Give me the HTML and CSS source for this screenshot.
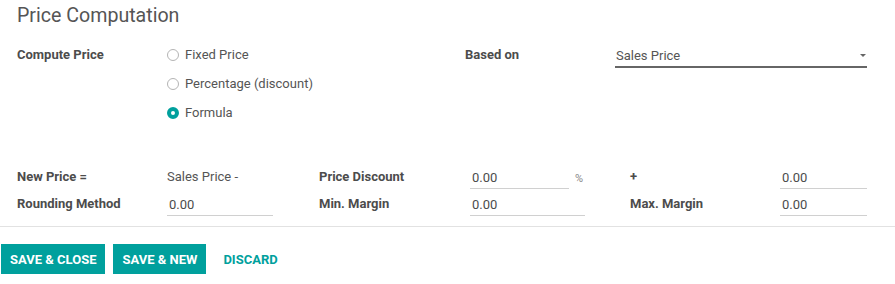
FILE: index.html
```html
<!DOCTYPE html>
<html>
<head>
<meta charset="utf-8">
<link rel="stylesheet" href="styles.css">
</head>
<body>
<div class="sheet">
  <h2 class="title">Price Computation</h2>
  <div class="group-top">
    <div class="lbl">Compute Price</div>
    <div class="radios">
      <label class="radio"><span class="dot"></span>Fixed Price</label>
      <label class="radio"><span class="dot"></span>Percentage (discount)</label>
      <label class="radio"><span class="dot on"></span>Formula</label>
    </div>
    <div class="lbl">Based on</div>
    <div class="select"><span>Sales Price</span><span class="caret"></span></div>
  </div>
  <div class="group-formula">
    <div class="lbl">New Price =</div>
    <div class="val">Sales Price -</div>
    <div class="lbl">Price Discount</div>
    <div class="pct"><div class="input w100">0.00</div><span class="unit">%</span></div>
    <div class="lbl">+</div>
    <div class="input">0.00</div>

    <div class="lbl">Rounding Method</div>
    <div class="input w107">0.00</div>
    <div class="lbl">Min. Margin</div>
    <div class="input w115">0.00</div>
    <div class="lbl">Max. Margin</div>
    <div class="input">0.00</div>
  </div>
</div>
<div class="footer">
  <button class="btn primary">SAVE &amp; CLOSE</button>
  <button class="btn primary">SAVE &amp; NEW</button>
  <button class="btn link">DISCARD</button>
</div>
</body>
</html>
```
FILE: styles.css
```css
html, body {
  margin: 0;
  padding: 0;
  background: #fff;
}
body {
  font-family: Roboto, "Noto Sans", sans-serif;
  font-size: 13px;
  color: #4c4c4c;
  width: 895px;
}
.sheet {
  padding: 0 28px 0 17px;
  border-bottom: 1px solid #e2e2e2;
  height: 227px;
  box-sizing: border-box;
}
.title {
  margin: 0;
  padding-top: 4px;
  font-size: 19.6px;
  font-weight: 400;
  line-height: 24px;
  color: #555;
}
.group-top {
  margin-top: 19px;
  display: grid;
  grid-template-columns: 150px 298px 150px 252px;
  align-items: start;
}
.lbl {
  font-weight: 700;
  color: #4c4c4c;
  line-height: 16px;
}
.radios {
  display: flex;
  flex-direction: column;
  gap: 13px;
}
.radio {
  display: flex;
  align-items: center;
  line-height: 16px;
  color: #555;
}
.dot {
  width: 10px;
  height: 10px;
  border: 1px solid #b4b4b4;
  border-radius: 50%;
  margin-right: 6px;
  box-sizing: content-box;
  flex: none;
}
.dot.on {
  width: 4px;
  height: 4px;
  border: 4px solid #00a09d;
  background: #fff;
}
.select {
  display: flex;
  justify-content: space-between;
  align-items: center;
  border-bottom: 2px solid #666;
  padding: 1px 0 2px 1px;
  line-height: 16px;
  color: #555;
}
.caret {
  width: 0;
  height: 0;
  border-left: 3px solid transparent;
  border-right: 3px solid transparent;
  border-top: 3px solid #666;
  margin-right: 1px;
  margin-top: -1px;
}
.group-formula {
  margin-top: 48px;
  display: grid;
  grid-template-columns: 150px 152px 151px 160px 150px 87px;
  row-gap: 7px;
  align-items: start;
}
.val {
  color: #555;
  line-height: 16px;
}
.input {
  border-bottom: 1px solid #d0d0d0;
  padding: 1px 1px 2px 2px;
  line-height: 16px;
  color: #4c4c4c;
}
.w100 { width: 96px; }
.w107 { width: 103px; }
.w115 { width: 112px; }
.pct {
  display: flex;
  align-items: flex-start;
}
.unit {
  margin-left: 6px;
  margin-top: 2px;
  color: #888;
  font-size: 11px;
  line-height: 16px;
}
.footer {
  display: flex;
  align-items: center;
  gap: 8px;
  padding: 17px 0 0 1px;
}
.btn {
  font-family: Roboto, "Noto Sans", sans-serif;
  font-size: 13px;
  font-weight: 700;
  height: 30px;
  padding: 0 9px;
  border: none;
  border-radius: 0;
  cursor: pointer;
}
.primary {
  background: #00a09d;
  color: #fff;
}
.link {
  background: transparent;
  color: #00a09d;
}
```
